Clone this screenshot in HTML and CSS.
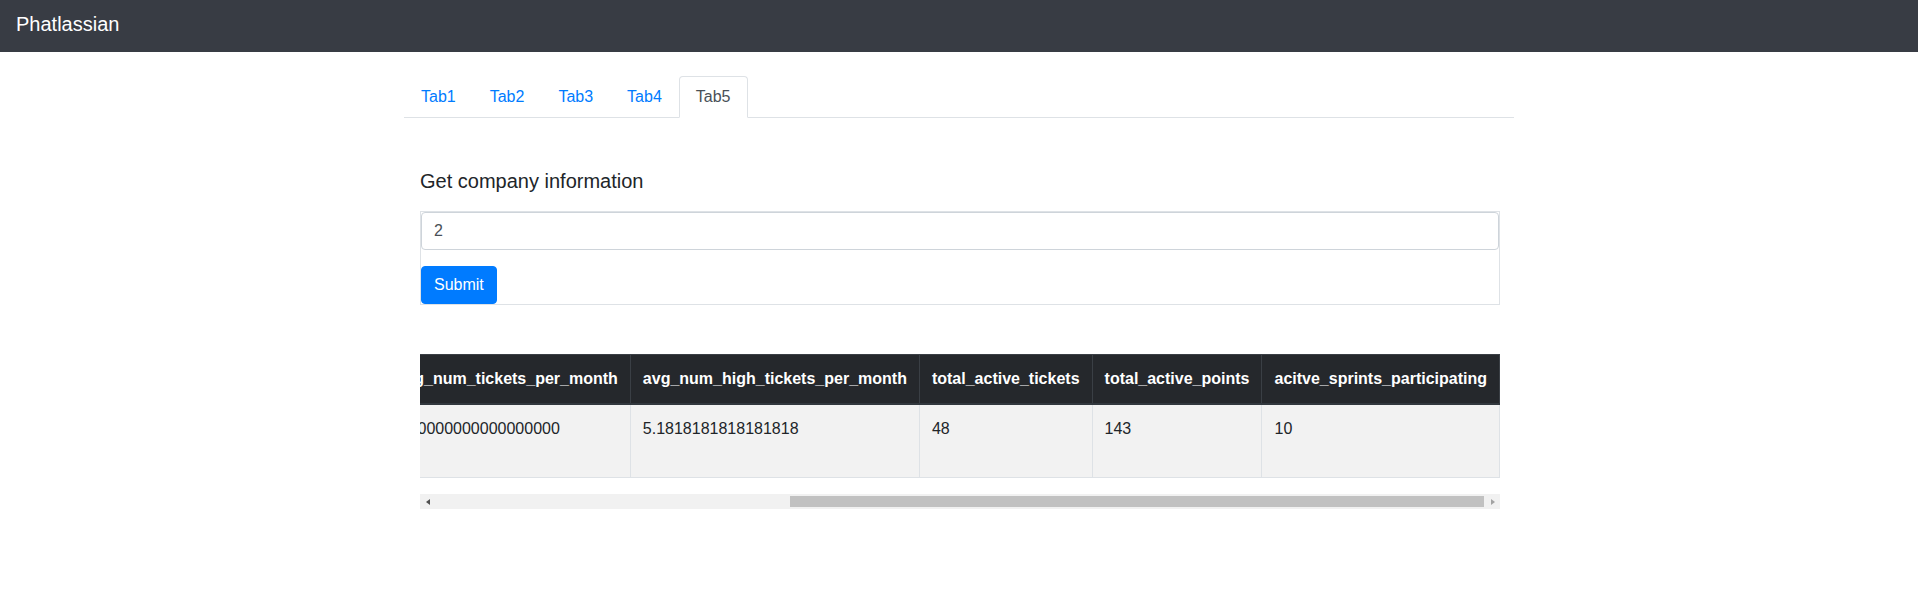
FILE: index.html
```html
<!DOCTYPE html>
<html lang="en">
<head>
<meta charset="utf-8">
<title>Phatlassian</title>
<link rel="stylesheet" href="styles.css">
</head>
<body>
<nav class="navbar"><span class="brand">Phatlassian</span></nav>
<main class="container">
  <ul class="tabs">
    <li class="tab-item"><a class="tab-link" href="#">Tab1</a></li>
    <li class="tab-item"><a class="tab-link" href="#">Tab2</a></li>
    <li class="tab-item"><a class="tab-link" href="#">Tab3</a></li>
    <li class="tab-item"><a class="tab-link" href="#">Tab4</a></li>
    <li class="tab-item"><a class="tab-link active" href="#">Tab5</a></li>
  </ul>
  <section class="pane">
    <h5 class="title">Get company information</h5>
    <form class="query-form">
      <input class="field" type="text" value="2">
      <button class="btn" type="button">Submit</button>
    </form>
    <div class="table-scroll">
      <table class="data">
        <thead>
          <tr>
            <th>company_id</th>
            <th>company_name</th>
            <th>num_users</th>
            <th>num_projects</th>
            <th>avg_num_tickets_per_month</th>
            <th>avg_num_high_tickets_per_month</th>
            <th>total_active_tickets</th>
            <th>total_active_points</th>
            <th>acitve_sprints_participating</th>
          </tr>
        </thead>
        <tbody>
          <tr>
            <td>2</td>
            <td>Phat Company Ltd</td>
            <td>14</td>
            <td>6</td>
            <td>11.0000000000000000</td>
            <td>5.1818181818181818</td>
            <td>48</td>
            <td>143</td>
            <td>10</td>
          </tr>
        </tbody>
      </table>
    </div>
    <div class="hscroll">
      <span class="arrow arrow-left"></span>
      <span class="track-gap"></span>
      <span class="thumb"></span>
      <span class="arrow arrow-right"></span>
    </div>
  </section>
</main>
</body>
</html>
```
FILE: styles.css
```css
* { box-sizing: border-box; }

body {
  margin: 0;
  font-family: "Liberation Sans", Arial, sans-serif;
  font-size: 16px;
  line-height: 1.5;
  color: #212529;
  background: #fff;
}

.navbar {
  height: 52px;
  background: #383c44;
  padding: 9px 16px 13px;
}

.brand {
  display: block;
  color: #fff;
  font-size: 20px;
  line-height: 30px;
}

.container {
  width: 1110px;
  margin: 0 auto;
}

.tabs {
  list-style: none;
  margin: 24px 0 0;
  padding: 0;
  display: flex;
  border-bottom: 1px solid #dee2e6;
}

.tab-item { margin-bottom: -1px; }

.tab-link {
  display: block;
  padding: 8px 16px;
  line-height: 24px;
  color: #007bff;
  text-decoration: none;
  border: 1px solid transparent;
  border-top-left-radius: 4px;
  border-top-right-radius: 4px;
}

.tab-link.active {
  color: #495057;
  background: #fff;
  border-color: #dee2e6 #dee2e6 #fff;
}

.pane {
  padding: 51px 14px 0 16px;
}

.title {
  margin: 0 0 18px;
  font-size: 20px;
  font-weight: 500;
  line-height: 24px;
  color: #212529;
}

.query-form {
  border: 1px solid #dee2e6;
  display: flex;
  flex-direction: column;
  align-items: flex-start;
  gap: 16px;
}

.field {
  width: 100%;
  height: 38px;
  padding: 6px 12px;
  font-family: inherit;
  font-size: 16px;
  line-height: 24px;
  color: #495057;
  border: 1px solid #ced4da;
  border-radius: 4px;
  background: #fff;
  outline: none;
}

.btn {
  height: 38px;
  padding: 6px 12px;
  font-family: inherit;
  font-size: 16px;
  line-height: 24px;
  color: #fff;
  background: #007bff;
  border: 1px solid #007bff;
  border-radius: 4px;
}

.table-scroll {
  margin-top: 49px;
  overflow: hidden;
  direction: rtl;
}

.data {
  direction: ltr;
  width: 100%;
  margin-bottom: 16px;
  border-collapse: collapse;
  border: 1px solid #dee2e6;
}

.data th {
  padding: 12px;
  text-align: left;
  white-space: nowrap;
  font-weight: 700;
  color: #fff;
  background: #25282c;
  border: 1px solid #3a3f45;
  border-bottom: 2px solid #32383e;
  vertical-align: bottom;
}

.data td {
  padding: 12px;
  vertical-align: top;
  background: #f2f2f2;
  border: 1px solid #dee2e6;
}

.hscroll {
  display: flex;
  height: 15px;
  background: #f1f1f1;
}

.arrow {
  flex: 0 0 15px;
  display: flex;
  align-items: center;
  justify-content: center;
}

.arrow::before {
  content: "";
  width: 0;
  height: 0;
  border-top: 3px solid transparent;
  border-bottom: 3px solid transparent;
}

.arrow-left::before { border-right: 4px solid #505050; }
.arrow-right::before { border-left: 4px solid #a3a3a3; }

.track-gap { flex: 1; }

.thumb {
  flex: 0 0 694px;
  margin: 2px 1px 2px 0;
  background: #c1c1c1;
}
```
